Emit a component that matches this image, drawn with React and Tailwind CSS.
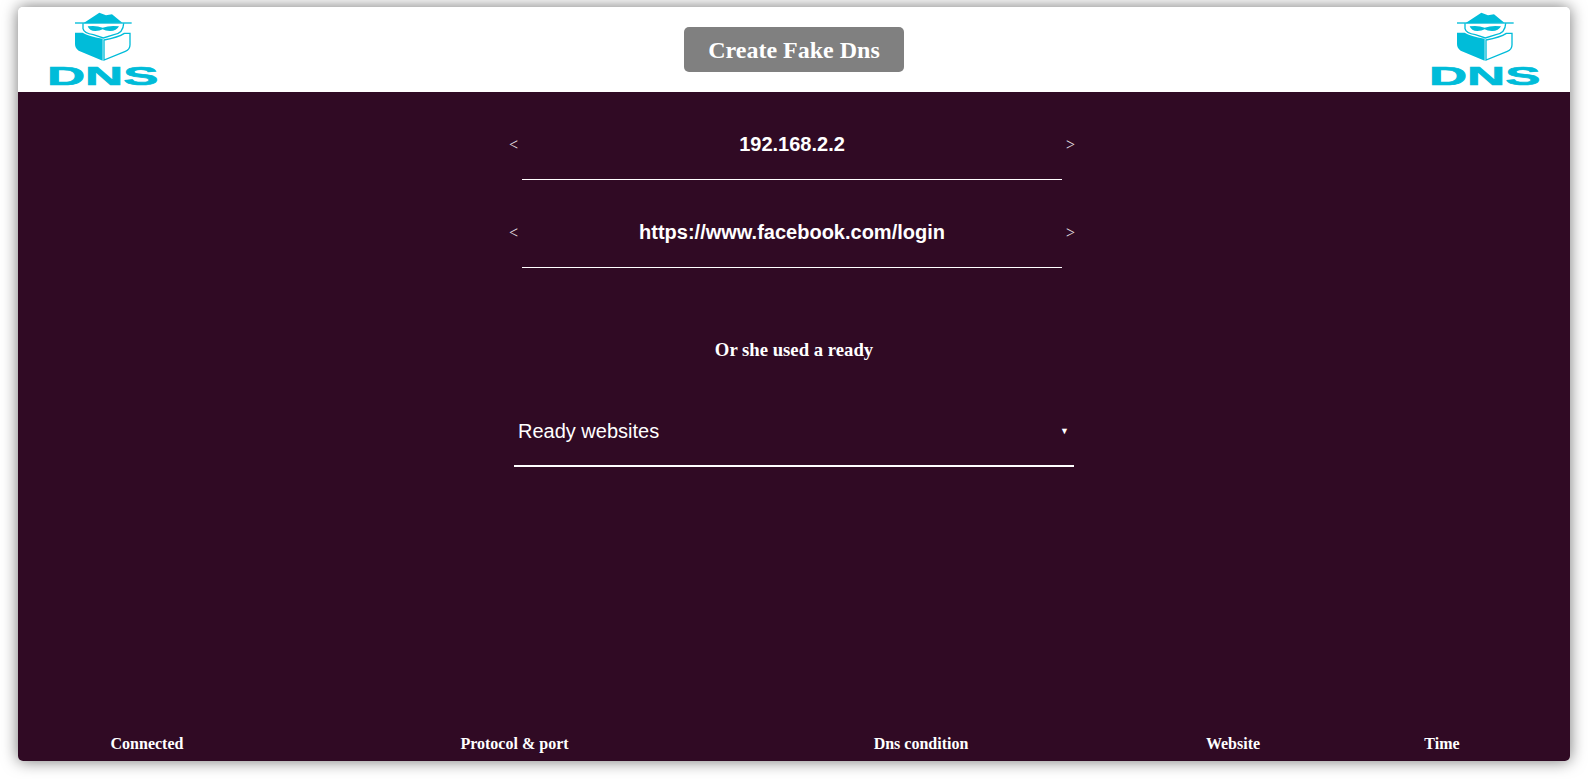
import React from 'react';

const Logo = () => (
    <svg width="108" height="72" viewBox="27 15 324 216" className="overflow-visible">
        <polygon points="130,46 178,14 198,22 216,19 247,44" fill="#00bcd9" />
        <rect x="105" y="43" width="170" height="4" fill="#00bcd9" />
        <path d="M129 46 V62 Q132 76 160 80 L190 90 L222 80 Q250 76 251 46" fill="none" stroke="#00bcd9" strokeWidth="4" />
        <path d="M143 55 Q168 51 188 59 Q210 51 237 55 Q230 69 210 69 Q196 69 188 64 Q180 69 166 69 Q148 69 143 55 Z" fill="#00bcd9" />
        <path d="M105 74 L128 74 Q145 84 188 92 V158 L116 128 Q105 120 105 108 Z" fill="#00bcd9" />
        <path d="M192 96 Q235 88 253 76 H270 V110 Q270 124 256 130 L192 156 Z" fill="#fff" stroke="#00bcd9" strokeWidth="4" />
        <text x="21" y="231" textLength="334" lengthAdjust="spacingAndGlyphs" fontFamily="'Liberation Sans', sans-serif" fontWeight="700" fontSize="80" fill="#00bcd9" stroke="#00bcd9" strokeWidth="2">DNS</text>
    </svg>
);

const Slider = ({ value }) => (
    <div className="pt-[30px]">
        <div className="flex items-center justify-between h-[44px] w-[566px] mx-auto -translate-x-[2px]">
            <span className="font-['Liberation_Serif',serif] text-[16px] text-[#e8e2e6] pt-[2px]">&lt;</span>
            <span className="font-['Liberation_Sans',sans-serif] font-bold text-[20px] text-white">{value}</span>
            <span className="font-['Liberation_Serif',serif] text-[16px] text-[#e8e2e6] pt-[2px]">&gt;</span>
        </div>
        <div className="h-px w-[540px] mt-[13px] mx-auto -translate-x-[2px] bg-white"></div>
    </div>
);

const App = () => {
    const columns = ['Connected', 'Protocol & port', 'Dns condition', 'Website', 'Time'];

    return (
        <div className="h-[779px] bg-white pt-[7px] px-[18px] overflow-hidden">
            <div className="h-[754px] flex flex-col rounded-[5px] overflow-hidden shadow-[0_0_16px_rgba(0,0,0,0.55)]">
                <header className="h-[85px] shrink-0 bg-white flex items-start justify-between pt-[6px] pl-[31px] pr-[31px] relative">
                    <Logo />
                    <button className="mt-[14px] w-[220px] h-[45px] rounded-[5px] bg-[#808080] text-white font-['Liberation_Serif',serif] font-bold text-[24px]">
                        Create Fake Dns
                    </button>
                    <Logo />
                </header>
                <main className="flex-1 flex flex-col bg-[#300a24] text-white">
                    <Slider value="192.168.2.2" />
                    <Slider value="https://www.facebook.com/login" />
                    <h3 className="mt-[71px] text-center font-['Liberation_Serif',serif] font-bold text-[18.72px] leading-[22px]">
                        Or she used a ready
                    </h3>
                    <div className="mt-[49px] w-[560px] mx-auto h-[57px] border-b-2 border-white pl-[4px] pr-[5px] pb-[13px] flex items-center justify-between font-['Liberation_Sans',sans-serif] text-[20px]">
                        <span>Ready websites</span>
                        <span className="text-[9px] pt-[2px]">▼</span>
                    </div>
                    <div className="mt-auto grid grid-cols-[258px_477px_336px_288px_130px] pb-[8px] font-['Liberation_Serif',serif] font-bold text-[16px] leading-[18px] text-center">
                        {columns.map((col) => (
                            <div key={col}>{col}</div>
                        ))}
                    </div>
                </main>
            </div>
        </div>
    );
};

export default App;
